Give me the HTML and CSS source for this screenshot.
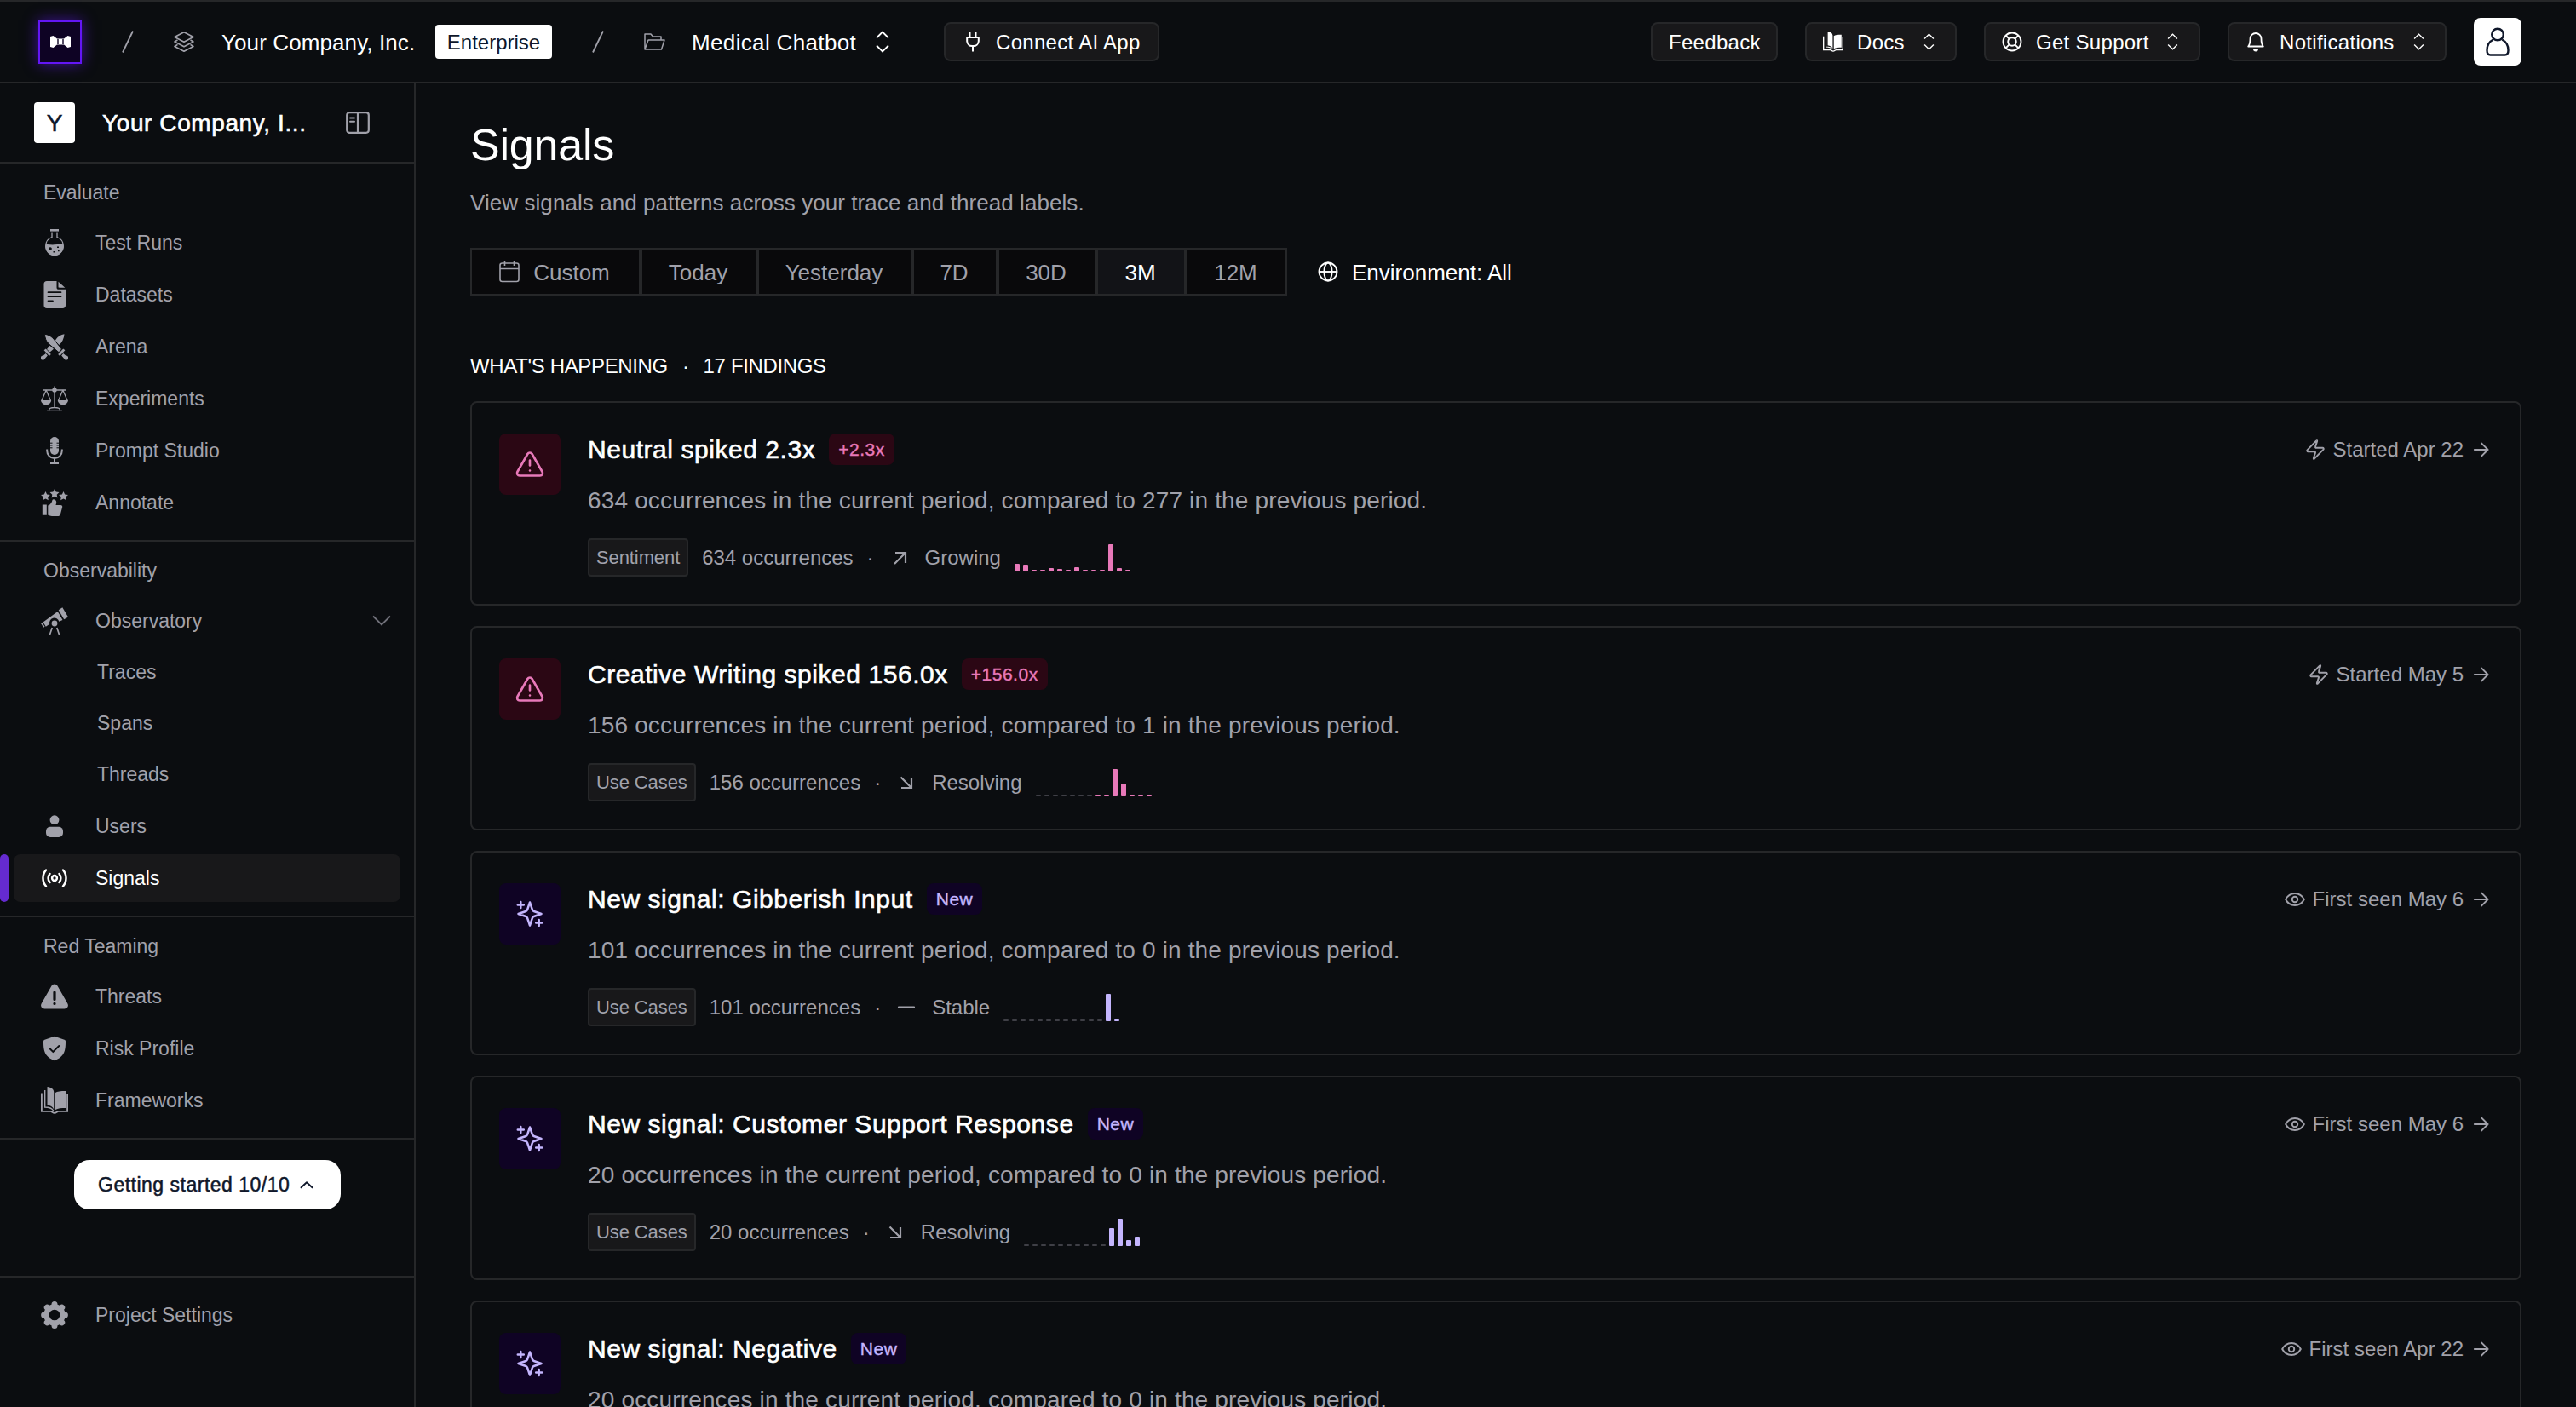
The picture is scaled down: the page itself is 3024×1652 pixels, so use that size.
FILE: index.html
```html
<!DOCTYPE html>
<html lang="en">
<head>
<meta charset="UTF-8" />
<meta name="viewport" content="width=device-width, initial-scale=1.0"/>
<title>Signals</title>
<link rel="stylesheet" href="styles.css">
</head>
<body>

<!-- Icon set -->
<svg class="sprite" xmlns="http://www.w3.org/2000/svg">
  <symbol id="i-slash" viewBox="0 0 14 28"><path d="M13 1.5 1 26.5" fill="none" stroke="currentColor" stroke-width="1.8"/></symbol>
  <symbol id="i-layers" viewBox="0 0 24 24"><g fill="none" stroke="currentColor" stroke-width="1.6" stroke-linejoin="round" stroke-linecap="round"><path d="M12 .8 23 6.5 12 12.2 1 6.5z"/><path d="M4 10.3 1 12l11 5.8L23 12l-3-1.7"/><path d="M4 15.8 1 17.5l11 5.8 11-5.8-3-1.7"/></g></symbol>
  <symbol id="i-folder" viewBox="0 0 26 22"><path d="M2 20V2h7l2.5 3H21v4M2 20 6 9h19l-3.500 11z" fill="none" stroke="currentColor" stroke-width="1.500" stroke-linejoin="round"/></symbol>
  <symbol id="i-updown" viewBox="0 0 16 26"><path d="M1 8.500 8 1.500l7 7M1 17.500l7 7 7-7" fill="none" stroke="currentColor" stroke-width="1.800"/></symbol>
  <symbol id="i-plug" viewBox="0 0 16 24"><path d="M4.500 1v6M11.500 1v6M1.200 7h13.600v4.500a6 6 0 0 1-6 5.500H7.200a6 6 0 0 1-6-5.500zM8 17v6.500" fill="none" stroke="currentColor" stroke-width="2"/></symbol>
  <symbol id="i-book" viewBox="0 0 32 32"><g fill="currentColor"><path d="M7.500 0C12 .5 15 2.500 15.200 6v20.500C14 23.500 11 22 7.500 21.500z"/><path d="M17 27V7c2-1.600 6-2 12-2v20c-5 0-9 .2-12 2z"/></g><path d="M4.700 4v20c5 0 8.500 1.500 10 4" fill="none" stroke="currentColor" stroke-width="1.400"/><path d="M.9 7.500v21.300h10.500c1.500 0 2.500 2 4.600 2s3.100-2 4.600-2h10.500V9" fill="none" stroke="currentColor" stroke-width="1.800"/></symbol>
  <symbol id="i-lifebuoy" viewBox="0 0 24 24"><g fill="none" stroke="currentColor" stroke-width="1.900"><circle cx="12" cy="12" r="10.500"/><circle cx="12" cy="12" r="4.800"/><path d="m4.600 4.600 4 4M15.400 15.400l4 4M19.400 4.600l-4 4M8.600 15.400l-4 4"/></g></symbol>
  <symbol id="i-bell" viewBox="0 0 20 24"><path d="M1.200 17.500C3.200 15 3.500 12 3.500 8.500a6.500 6.500 0 0 1 13 0c0 3.500.3 6.500 2.300 9z" fill="none" stroke="currentColor" stroke-width="1.800" stroke-linejoin="round"/><path d="M7 20.500h6a3 3 0 0 1-6 0z" fill="currentColor"/></symbol>
  <symbol id="i-avatar" viewBox="0 0 28 34"><g fill="none" stroke="currentColor" stroke-width="2.400"><circle cx="14" cy="8.500" r="6.800"/><path d="M8.800 14.500C4 17 1.500 21.500 1.500 27c0 3.500 1 5.500 4 5.500h17c3 0 4-2 4-5.500 0-5.500-2.500-10-7.300-12.500"/></g></symbol>
  <symbol id="i-panel" viewBox="0 0 28 26"><g fill="none" stroke="currentColor" stroke-width="2.200"><rect x="1.200" y="1.200" width="25.600" height="23.600" rx="3"/><path d="M14 1v24"/><path d="M5 7.500h5M5 11.800h5" stroke-width="2" stroke-linecap="round"/></g></symbol>

  <symbol id="i-flask" viewBox="0 0 32 32"><path d="M11 0h10v2.600H11z" fill="currentColor"/><path d="M13 3.500v6C8.500 11 5.700 15 5.700 20a10.300 10.300 0 0 0 20.600 0c0-5-2.800-9-7.300-10.500v-6" fill="none" stroke="currentColor" stroke-width="1.300"/><path fill="currentColor" fill-rule="evenodd" d="M5.500 18.300c3-1 6.500.6 10.500 0s7.500-.8 10.500 0c1 7.500-4.500 13-10.500 13S4.500 26 5.500 18.300zM11 21.200a1.800 1.800 0 1 0 .01 0zM19 20.500v1.600h2v-1.600zM14.500 26v1.600h1.800V26zM20 25v1.200h1.600V25z"/></symbol>
  <symbol id="i-doc" viewBox="0 0 32 32"><path fill="currentColor" d="M7 0h11.500v7.500c0 1.500.8 2.300 2.300 2.300h8.200V28.500c0 2.200-1.300 3.500-3.500 3.500H7c-2.200 0-3.500-1.300-3.500-3.500v-25C3.500 1.300 4.800 0 7 0zM20.500.7l7.800 7.100h-6.600c-.8 0-1.200-.4-1.200-1.200z"/><path d="M8.500 13.200h15M8.500 18.200h15M8.500 23.300h5.500" class="cut" stroke-width="1.700" stroke-linecap="round"/></symbol>
  <symbol id="i-swords" viewBox="0 0 32 32"><g fill="currentColor"><path d="M27.500 1.200c-4 .8-7.500 2.700-9.700 6l-1.300 2.300 5 4.500c3.500-3 5.500-7.500 6-12.800z"/><path d="M10.500 14.800 7 19l3.500 3.500 4.500-3.700z"/><path d="m3.600 20.200 2.200-1.700 6 6.500-2 2z"/><path d="m5.800 24-3 2.500a2.600 2.600 0 1 0 2 3.500l3-3.500z"/><path class="gap" d="M4.500 1.200c5 .8 8.500 3.200 11 6.500l9 11.300-3.500 3.700L9 12.500C6 9.500 4.800 6 4.500 1.200z"/><path d="m28.400 20.200-2.200-1.700-6 6.500 2 2z"/><path d="m26.200 24 3 2.500a2.600 2.600 0 1 1-2 3.500l-3-3.500z"/></g></symbol>
  <symbol id="i-scales" viewBox="0 0 32 32"><g fill="none" stroke="currentColor" stroke-width="1.300"><path d="M3 6h26M16 1.500V27M9.500 29.500c0-2.500 2-3 6.500-3s6.500.5 6.500 3M7 30.300h18"/><path d="M6.200 6 .9 18.200M6.200 6l5.200 12.200M25.800 6l-5.200 12.200M25.800 6l5.300 12.200"/></g><g fill="currentColor"><circle cx="16" cy="6" r="2.700"/><path d="M0 18h12.200c-.4 3.300-3 5.300-6 5.300S.4 21.300 0 18zM19.800 18H32c-.4 3.300-3 5.300-6 5.300s-5.800-2-6.200-5.300z"/></g></symbol>
  <symbol id="i-mic" viewBox="0 0 32 32"><rect x="11" y="0" width="10" height="21" rx="5" fill="currentColor"/><path d="M10 7.200h3.500M10 10h3.500M10 12.800h3.500M18.500 7.200H22M18.500 10H22M18.500 12.800H22" class="cut" stroke-width="1"/><path d="M7.200 14.500v1.800a8.800 8.800 0 0 0 17.600 0v-1.800M16 25v6M11 31h10" fill="none" stroke="currentColor" stroke-width="2"/></symbol>
  <symbol id="i-annotate" viewBox="0 0 32 32"><g fill="currentColor"><path d="m16 0 1.700 3.500 3.800.5-2.800 2.700.7 3.800-3.400-1.800-3.400 1.800.7-3.800L10.500 4l3.800-.5z"/><path d="m5.500 3 1.600 3.400 3.800.5-2.800 2.600.7 3.800-3.300-1.800-3.400 1.800.7-3.800L0 6.900l3.800-.5zM26.500 3l1.600 3.400 3.900.5-2.900 2.600.7 3.800-3.300-1.800-3.400 1.800.7-3.800L21 6.900l3.900-.5z"/><path d="M1.800 18.500h5v12.200h-5zM8.300 19.500c3.200-1 4.700-4 5.200-6.500.4-1.300 4.500-1 4.700 2.500 0 1.500-.5 2.500-.7 3.500h5.500c2 0 2.700 1.500 2 3l-2 7.500c-.6 2-1.500 2.500-3.500 2.500H13c-2 0-3-1.300-4.700-1.300z"/></g></symbol>
  <symbol id="i-telescope" viewBox="0 0 32 32"><g fill="currentColor"><path d="m20.700 3.200 4.600-3 6.700 11.300-4.800 2.700z"/><path d="M2.600 17.500 19.700 5l5.800 10-4.200 1.800a5.700 5.700 0 0 0-11.100 3l-4.400 3z"/><circle cx="16" cy="19" r="3.400"/></g><path d="m.8 18.500 3 4.700M13.200 24l-2.700 8M18.800 24l2.700 8" fill="none" stroke="currentColor" stroke-width="1.700"/></symbol>
  <symbol id="i-user" viewBox="0 0 32 32"><g fill="currentColor"><circle cx="16" cy="8.700" r="5.400"/><rect x="6" y="16.700" width="20" height="12.200" rx="5"/></g></symbol>
  <symbol id="i-signal" viewBox="0 0 32 32"><g fill="none" stroke="currentColor" stroke-width="2.500" stroke-linecap="round"><circle cx="16" cy="16" r="2.900"/><path d="M10.500 11a7.500 7.500 0 0 0 0 10M21.500 11a7.500 7.500 0 0 1 0 10M6 6.500c-4.700 5.500-4.700 13.500 0 19M26 6.500c4.700 5.500 4.700 13.500 0 19"/></g></symbol>
  <symbol id="i-threat" viewBox="0 0 32 32"><path fill="currentColor" d="M12.400 3.800c1.700-3 5.500-3 7.200 0l11.700 20.500c1.700 3-.2 6.200-3.600 6.200H4.300c-3.400 0-5.300-3.200-3.600-6.200z"/><path class="cut" d="M16 11v8.500M16 24.300v.2" stroke-width="3.200" stroke-linecap="round"/></symbol>
  <symbol id="i-shield" viewBox="0 0 32 32"><path fill="currentColor" d="m16 1.800 11.500 4c1 .3 1.500 1 1.500 2 0 9-.5 18-13 22.500C3.500 25.800 3 16.800 3 7.800c0-1 .5-1.700 1.500-2z"/><path class="cut" d="m10.800 16.500 3.500 3.500 7-7" stroke-width="1.900" stroke-linecap="round"/></symbol>
  <symbol id="i-gear" viewBox="0 0 32 32"><circle cx="16" cy="16" r="9.500" fill="none" stroke="currentColor" stroke-width="6.400"/><g stroke="currentColor" stroke-width="7" stroke-linecap="round"><path d="M16 3.600v1M16 27.400v1M3.600 16h1M27.400 16h1M7.300 7.300l.7.700M24 24l.7.700M24.700 7.300 24 8M8 24l-.7.700"/></g></symbol>
  <symbol id="i-down" viewBox="0 0 22 14"><path d="m1 1.500 10 10 10-10" fill="none" stroke="currentColor" stroke-width="1.800"/></symbol>
  <symbol id="i-up" viewBox="0 0 16 10"><path d="m1.500 8.300 6.500-6 6.500 6" fill="none" stroke="currentColor" stroke-width="1.900" stroke-linecap="round" stroke-linejoin="round"/></symbol>

  <symbol id="i-calendar" viewBox="0 0 24 26"><g fill="none" stroke="currentColor" stroke-width="1.600"><rect x="1" y="3" width="22" height="21.500" rx="2.500"/><path d="M1 9.500h22M6.500.5V6M17.500.5V6"/></g></symbol>
  <symbol id="i-globe" viewBox="0 0 24 24"><g fill="none" stroke="currentColor" stroke-width="1.900"><circle cx="12" cy="12" r="10.500"/><ellipse cx="12" cy="12" rx="4.600" ry="10.500"/><path d="M1.500 12h21"/></g></symbol>
  <symbol id="i-alert" viewBox="0 0 24 24"><path d="m21.730 18-8-14a2 2 0 0 0-3.480 0l-8 14A2 2 0 0 0 4 21h16a2 2 0 0 0 1.730-3M12 9v4M12 17h.01" fill="none" stroke="currentColor" stroke-width="1.750" stroke-linecap="round" stroke-linejoin="round"/></symbol>
  <symbol id="i-sparkle" viewBox="0 0 36 36"><path d="M18 4.500 21 13.300q.5 1.300 1.700 1.700L31.500 18l-8.800 3q-1.200.4-1.700 1.700L18 31.500l-3-8.800q-.5-1.300-1.700-1.700L4.500 18l8.800-3q1.200-.4 1.700-1.700zM7.300 4v7M3.800 7.500h7M28.700 25v7M25.200 28.500h7" fill="none" stroke="currentColor" stroke-width="2.500" stroke-linecap="round" stroke-linejoin="round"/></symbol>
  <symbol id="i-bolt" viewBox="0 0 24 24"><path d="M4 14a1 1 0 0 1-.78-1.630l9.900-10.200a.5.5 0 0 1 .86.460l-1.920 6.020A1 1 0 0 0 13 10h7a1 1 0 0 1 .78 1.630l-9.900 10.200a.5.5 0 0 1-.86-.460l1.920-6.020A1 1 0 0 0 11 14z" fill="none" stroke="currentColor" stroke-width="1.800" stroke-linejoin="round"/></symbol>
  <symbol id="i-eye" viewBox="0 0 24 24"><g fill="none" stroke="currentColor" stroke-width="1.800"><path d="M2 12c2.200-4.300 5.800-6.500 10-6.500s7.800 2.200 10 6.500c-2.200 4.300-5.800 6.500-10 6.500S4.200 16.300 2 12z" stroke-linejoin="round"/><circle cx="12" cy="12" r="3"/></g></symbol>
  <symbol id="i-arrow" viewBox="0 0 24 24"><path d="M4.500 12H19M12 5l7 7-7 7" fill="none" stroke="currentColor" stroke-width="1.800" stroke-linecap="round" stroke-linejoin="round"/></symbol>
  <symbol id="i-growing" viewBox="0 0 28 28"><path d="M9 8h12v12M21 8 8 21" fill="none" stroke="currentColor" stroke-width="2.200"/></symbol>
  <symbol id="i-resolving" viewBox="0 0 28 28"><path d="M20 8v12H8M20 20 7.500 7.500" fill="none" stroke="currentColor" stroke-width="2.200"/></symbol>
  <symbol id="i-stable" viewBox="0 0 28 28"><path d="M5 13.500h18" fill="none" stroke="currentColor" stroke-width="2.200" stroke-linecap="round"/></symbol>
</svg>

<header class="topbar">
  <div class="logo">
    <svg width="24" height="14" viewBox="0 0 24 14"><path d="M0 1 3.500 0 8 3.500h8L20.500 0 24 1v12l-3.500 1-4.500-3.500H8L3.500 14 0 13z" fill="#fff"/><path d="M9 4v6M15 4v6" stroke="#0e0324" stroke-width="1.400"/></svg>
  </div>
  <svg class="slash"><use href="#i-slash"/></svg>
  <svg class="layers"><use href="#i-layers"/></svg>
  <span class="crumb org">Your Company, Inc.</span>
  <span class="plan">Enterprise</span>
  <svg class="slash"><use href="#i-slash"/></svg>
  <svg class="folder"><use href="#i-folder"/></svg>
  <span class="crumb project">Medical Chatbot</span>
  <svg class="switcher"><use href="#i-updown"/></svg>
  <button class="btn connect"><svg class="plug"><use href="#i-plug"/></svg>Connect AI App</button>

  <div class="actions">
    <button class="btn feedback">Feedback</button>
    <button class="btn docs"><svg class="ico"><use href="#i-book"/></svg>Docs<svg class="updown"><use href="#i-updown"/></svg></button>
    <button class="btn support"><svg class="ico"><use href="#i-lifebuoy"/></svg>Get Support<svg class="updown"><use href="#i-updown"/></svg></button>
    <button class="btn notify"><svg class="ico bell"><use href="#i-bell"/></svg>Notifications<svg class="updown"><use href="#i-updown"/></svg></button>
    <div class="avatar"><svg><use href="#i-avatar"/></svg></div>
  </div>
</header>

<div class="layout">
  <aside class="sidebar">
    <div class="workspace">
      <span class="initial">Y</span>
      <span class="name">Your Company, I...</span>
      <svg><use href="#i-panel"/></svg>
    </div>

    <nav class="section">
      <h4>Evaluate</h4>
      <a class="item"><svg><use href="#i-flask"/></svg>Test Runs</a>
      <a class="item"><svg><use href="#i-doc"/></svg>Datasets</a>
      <a class="item"><svg><use href="#i-swords"/></svg>Arena</a>
      <a class="item"><svg><use href="#i-scales"/></svg>Experiments</a>
      <a class="item"><svg><use href="#i-mic"/></svg>Prompt Studio</a>
      <a class="item"><svg><use href="#i-annotate"/></svg>Annotate</a>
    </nav>

    <nav class="section">
      <h4>Observability</h4>
      <a class="item"><svg><use href="#i-telescope"/></svg>Observatory<svg class="expand"><use href="#i-down"/></svg></a>
      <div class="sub">
        <a>Traces</a>
        <a>Spans</a>
        <a>Threads</a>
      </div>
      <a class="item"><svg><use href="#i-user"/></svg>Users</a>
      <a class="item active"><svg><use href="#i-signal"/></svg>Signals</a>
    </nav>

    <nav class="section">
      <h4>Red Teaming</h4>
      <a class="item"><svg><use href="#i-threat"/></svg>Threats</a>
      <a class="item"><svg><use href="#i-shield"/></svg>Risk Profile</a>
      <a class="item"><svg><use href="#i-book"/></svg>Frameworks</a>
    </nav>

    <div class="onboarding">
      <button>Getting started 10/10<svg><use href="#i-up"/></svg></button>
    </div>

    <div class="settings">
      <a class="item"><svg><use href="#i-gear"/></svg>Project Settings</a>
    </div>
  </aside>

  <main class="content">
    <h1>Signals</h1>
    <p class="lead">View signals and patterns across your trace and thread labels.</p>

    <div class="filters">
      <div class="tabs">
        <button class="custom"><svg><use href="#i-calendar"/></svg>Custom</button>
        <button class="today">Today</button>
        <button class="yesterday">Yesterday</button>
        <button class="d7">7D</button>
        <button class="d30">30D</button>
        <button class="m3 active">3M</button>
        <button class="m12">12M</button>
      </div>
      <div class="environment"><svg><use href="#i-globe"/></svg>Environment: All</div>
    </div>

    <h2><span>WHAT'S HAPPENING</span><span>·</span><span>17 FINDINGS</span></h2>

    <article class="card spike">
      <div class="tile"><svg><use href="#i-alert"/></svg></div>
      <div class="body">
        <div class="head"><h3>Neutral spiked 2.3x</h3><span class="badge">+2.3x</span></div>
        <p>634 occurrences in the current period, compared to 277 in the previous period.</p>
        <div class="meta">
          <span class="chip">Sentiment</span><span>634 occurrences</span><span>·</span>
          <svg><use href="#i-growing"/></svg><span>Growing</span>
          <div class="spark" data-values="9 8 2 2 4 3 2 5 2 2 2 32 4 2"></div>
        </div>
      </div>
      <div class="when"><svg><use href="#i-bolt"/></svg><span>Started Apr 22</span><svg><use href="#i-arrow"/></svg></div>
    </article>

    <article class="card spike">
      <div class="tile"><svg><use href="#i-alert"/></svg></div>
      <div class="body">
        <div class="head"><h3>Creative Writing spiked 156.0x</h3><span class="badge">+156.0x</span></div>
        <p>156 occurrences in the current period, compared to 1 in the previous period.</p>
        <div class="meta">
          <span class="chip">Use Cases</span><span>156 occurrences</span><span>·</span>
          <svg><use href="#i-resolving"/></svg><span>Resolving</span>
          <div class="spark" data-values="0 0 0 0 0 0 0 2 2 32 15 2 2 2"></div>
        </div>
      </div>
      <div class="when"><svg><use href="#i-bolt"/></svg><span>Started May 5</span><svg><use href="#i-arrow"/></svg></div>
    </article>

    <article class="card fresh">
      <div class="tile"><svg><use href="#i-sparkle"/></svg></div>
      <div class="body">
        <div class="head"><h3>New signal: Gibberish Input</h3><span class="badge">New</span></div>
        <p>101 occurrences in the current period, compared to 0 in the previous period.</p>
        <div class="meta">
          <span class="chip">Use Cases</span><span>101 occurrences</span><span>·</span>
          <svg><use href="#i-stable"/></svg><span>Stable</span>
          <div class="spark" data-values="0 0 0 0 0 0 0 0 0 0 0 0 32 2"></div>
        </div>
      </div>
      <div class="when"><svg><use href="#i-eye"/></svg><span>First seen May 6</span><svg><use href="#i-arrow"/></svg></div>
    </article>

    <article class="card fresh">
      <div class="tile"><svg><use href="#i-sparkle"/></svg></div>
      <div class="body">
        <div class="head"><h3>New signal: Customer Support Response</h3><span class="badge">New</span></div>
        <p>20 occurrences in the current period, compared to 0 in the previous period.</p>
        <div class="meta">
          <span class="chip">Use Cases</span><span>20 occurrences</span><span>·</span>
          <svg><use href="#i-resolving"/></svg><span>Resolving</span>
          <div class="spark" data-values="0 0 0 0 0 0 0 0 0 0 21 32 7 11"></div>
        </div>
      </div>
      <div class="when"><svg><use href="#i-eye"/></svg><span>First seen May 6</span><svg><use href="#i-arrow"/></svg></div>
    </article>

    <article class="card fresh">
      <div class="tile"><svg><use href="#i-sparkle"/></svg></div>
      <div class="body">
        <div class="head"><h3>New signal: Negative</h3><span class="badge">New</span></div>
        <p>20 occurrences in the current period, compared to 0 in the previous period.</p>
      </div>
      <div class="when"><svg><use href="#i-eye"/></svg><span>First seen Apr 22</span><svg><use href="#i-arrow"/></svg></div>
    </article>
  </main>
</div>

<script>
// Build sparkline bars, empty days get a muted tick
document.querySelectorAll('.spark').forEach(el => {
  el.dataset.values.split(' ').forEach(v => {
    const bar = document.createElement('i');
    if (v === '0') bar.className = 'empty';
    bar.style.height = Math.max(2, v) + 'px';
    el.appendChild(bar);
  });
});
</script>

</body>
</html>
```

FILE: styles.css
```css
:root {
  --bg: #0b0d10;
  --line: #262729;
  --muted: #a1a1aa;
  --surface: #18181a;
  --ink: #0f172a;
}
* {
  box-sizing: border-box;
}
body {
  margin: 0;
  height: 1652px;
  overflow: hidden;
  background: var(--bg);
  color: #fff;
  font-family: "Liberation Sans", Arial, sans-serif;
}
svg {
  flex: none;
  display: block;
}
.sprite {
  position: absolute;
  width: 0;
  height: 0;
}
button {
  font-family: inherit;
  color: inherit;
  margin: 0;
}
h1, h2, h3, h4, p {
  margin: 0;
  font-weight: normal;
}

/* Top bar */
.topbar {
  display: flex;
  align-items: center;
  height: 98px;
  padding: 0 64px 0 45px;
  border-top: 2px solid var(--line);
  border-bottom: 2px solid var(--line);
  white-space: nowrap;
}
.logo {
  display: flex;
  align-items: center;
  justify-content: center;
  width: 51px;
  height: 51px;
  background: #0e0324;
  border: 2px solid #6316f5;
  box-shadow: 0 0 16px rgba(99, 22, 245, 0.6);
}
.slash {
  width: 14px;
  height: 28px;
  margin-left: 47px;
  color: var(--muted);
}
.layers {
  width: 24px;
  height: 24px;
  margin-left: 47px;
  color: var(--muted);
}
.crumb {
  font-size: 26px;
  line-height: 32px;
  padding-top: 2px;
}
.org {
  width: 283px;
  padding-left: 32px;
  letter-spacing: 0.1px;
}
.plan {
  width: 137px;
  height: 40px;
  line-height: 41px;
  text-align: center;
  font-size: 24px;
  border-radius: 4px;
  background: #fff;
  color: var(--ink);
}
.folder {
  width: 26px;
  height: 22px;
  margin-left: 46px;
  color: var(--muted);
}
.project {
  width: 247px;
  padding-left: 31px;
  letter-spacing: 0.35px;
}
.switcher {
  width: 16px;
  height: 26px;
}
.btn {
  display: flex;
  align-items: center;
  height: 46px;
  padding: 2px 0 0;
  border: 2px solid var(--line);
  border-radius: 8px;
  background: var(--surface);
  font-size: 24px;
  letter-spacing: 0.3px;
}
.btn svg {
  margin-top: -2px;
}
.connect {
  width: 253px;
  margin-left: 64px;
  padding-left: 24px;
}
.plug {
  width: 16px;
  height: 24px;
  margin-right: 19px;
}
.actions {
  display: flex;
  align-items: center;
  gap: 32px;
  margin-left: auto;
}
.ico {
  width: 24px;
  height: 24px;
  margin-right: 16px;
}
.bell {
  width: 20px;
  margin: 0 18px 0 2px;
}
.updown {
  width: 13px;
  height: 20px;
  margin-left: auto;
}
.feedback {
  width: 149px;
  padding-left: 19px;
}
.docs {
  width: 178px;
  padding: 2px 24px 0 19px;
}
.support {
  width: 254px;
  padding: 2px 24px 0 19px;
}
.notify {
  width: 257px;
  padding: 2px 24px 0 19px;
}
.avatar {
  display: flex;
  align-items: center;
  justify-content: center;
  width: 56px;
  height: 56px;
  border-radius: 8px;
  background: #fff;
  color: var(--ink);
}
.avatar svg {
  width: 28px;
  height: 34px;
}

/* Sidebar */
.layout {
  display: flex;
  height: 1554px;
  overflow: hidden;
}
.sidebar {
  flex: none;
  width: 488px;
  border-right: 2px solid var(--line);
  color: var(--muted);
  font-size: 23px;
}
.workspace {
  display: flex;
  align-items: center;
  height: 92px;
  padding: 0 52px 0 40px;
}
.initial {
  width: 48px;
  height: 48px;
  line-height: 49px;
  text-align: center;
  border-radius: 4px;
  background: #fff;
  color: var(--ink);
  font-size: 28px;
  -webkit-text-stroke: 0.5px;
}
.name {
  margin-left: 32px;
  padding-top: 1px;
  color: #fff;
  font-size: 28px;
  letter-spacing: 0.6px;
  -webkit-text-stroke: 0.6px;
}
.workspace svg {
  width: 28px;
  height: 26px;
  margin-left: auto;
}
.section {
  padding: 0 16px 16px;
  border-top: 2px solid var(--line);
}
.section h4 {
  height: 65px;
  padding: 1px 0 0 35px;
  line-height: 66px;
  font-size: 23px;
}
.item {
  display: flex;
  align-items: center;
  height: 56px;
  padding-left: 32px;
}
.item + .item {
  margin-top: 5px;
}
.item svg:first-child {
  width: 32px;
  height: 32px;
  margin-right: 32px;
}
.expand {
  width: 22px;
  height: 14px;
  margin: 0 11px 0 auto;
  color: #71717a;
}
.cut {
  fill: none;
  stroke: var(--bg);
}
.gap {
  stroke: var(--bg);
  stroke-width: 1;
}
.sub {
  padding: 2px 0 3px 98px;
}
.sub a {
  display: block;
  height: 60px;
  line-height: 60px;
}
.item.active {
  position: relative;
  width: 454px;
  border-radius: 8px;
  background: var(--surface);
  color: #fff;
}
.item.active::before {
  content: "";
  position: absolute;
  left: -16px;
  top: 0;
  width: 10px;
  height: 56px;
  border-radius: 5px;
  background: #652bd0;
}
.onboarding {
  height: 162px;
  padding: 24px 0 0 87px;
  border-top: 2px solid var(--line);
}
.onboarding button {
  display: flex;
  align-items: center;
  width: 313px;
  height: 58px;
  padding: 0 0 0 28px;
  border: 0;
  border-radius: 18px;
  background: #fff;
  color: var(--ink);
  font-size: 23px;
  letter-spacing: 0.5px;
  -webkit-text-stroke: 0.5px;
}
.onboarding svg {
  width: 16px;
  height: 10px;
  margin-left: 12px;
}
.settings {
  padding: 16px;
  border-top: 2px solid var(--line);
}

/* Main column */
.content {
  flex: 1;
  padding: 39px 64px 0;
}
h1 {
  font-size: 52px;
  line-height: 66px;
  letter-spacing: -0.2px;
}
.lead {
  margin-top: 19px;
  font-size: 26px;
  line-height: 32px;
  letter-spacing: 0.07px;
  color: var(--muted);
}
.filters {
  display: flex;
  align-items: center;
  margin-top: 37px;
}
.tabs {
  display: flex;
}
.tabs button {
  display: flex;
  align-items: center;
  justify-content: center;
  height: 56px;
  padding: 2px 2px 0 0;
  border: 2px solid var(--line);
  background: #09090b;
  color: var(--muted);
  font-size: 26px;
}
.tabs button.active {
  background: #121317;
  color: #fff;
}
.tabs svg {
  width: 24px;
  height: 26px;
  margin: -3px 16px 0 0;
}
.tabs .custom { width: 200px; }
.tabs .today { width: 137px; }
.tabs .yesterday { width: 182px; }
.tabs .d7 { width: 100px; }
.tabs .d30 { width: 116px; }
.tabs .m3 { width: 105px; }
.tabs .m12 { width: 119px; }
.environment {
  display: flex;
  align-items: center;
  margin-left: 36px;
  padding-top: 2px;
  font-size: 26px;
}
.environment svg {
  width: 24px;
  height: 24px;
  margin: -2px 16px 0 0;
}
h2 {
  display: flex;
  gap: 17px;
  margin: 67px 0 25px;
  font-size: 24px;
  line-height: 32px;
  letter-spacing: -0.35px;
}

/* Finding cards */
.card {
  display: flex;
  align-items: flex-start;
  height: 240px;
  margin-bottom: 24px;
  padding: 32px;
  border: 2px solid var(--line);
  border-radius: 8px;
}
.tile {
  display: flex;
  align-items: center;
  justify-content: center;
  width: 72px;
  height: 72px;
  margin: 4px 32px 0 0;
  border-radius: 8px;
}
.tile svg {
  width: 36px;
  height: 36px;
}
.body {
  flex: 1;
}
.head {
  display: flex;
  align-items: center;
  gap: 16px;
  height: 45px;
}
h3 {
  font-size: 30px;
  line-height: 45px;
  letter-spacing: 0.55px;
  -webkit-text-stroke: 0.6px;
}
.badge {
  height: 37px;
  padding: 0 11px;
  line-height: 37px;
  border-radius: 8px;
  font-size: 21px;
  letter-spacing: 0.5px;
  -webkit-text-stroke: 0.4px;
}
.spike .tile, .spike .badge {
  background: #2b0714;
  color: #e879b9;
}
.fresh .tile, .fresh .badge {
  background: #0f0324;
  color: #c4b5fd;
}
.body p {
  margin-top: 22px;
  font-size: 28px;
  line-height: 32px;
  letter-spacing: 0.16px;
  color: var(--muted);
}
.meta {
  display: flex;
  align-items: center;
  gap: 16px;
  height: 45px;
  margin-top: 28px;
  font-size: 24px;
  color: var(--muted);
}
.meta svg {
  width: 28px;
  height: 28px;
}
.chip {
  height: 45px;
  line-height: 42px;
  padding: 0 8px;
  border: 2px solid var(--line);
  border-radius: 4px;
  background: var(--surface);
  font-size: 22px;
  letter-spacing: -0.1px;
}
.spark {
  display: flex;
  align-items: flex-end;
  gap: 4px;
  height: 32px;
}
.spark i {
  width: 6px;
  border-radius: 1px;
}
.spike .spark i { background: #e879b9; }
.fresh .spark i { background: #c4b5fd; }
.card .spark i.empty { background: #3f3f46; }
.when {
  display: flex;
  align-items: center;
  gap: 8px;
  height: 45px;
  font-size: 24px;
  color: var(--muted);
}
.when svg {
  width: 26px;
  height: 26px;
}
```
